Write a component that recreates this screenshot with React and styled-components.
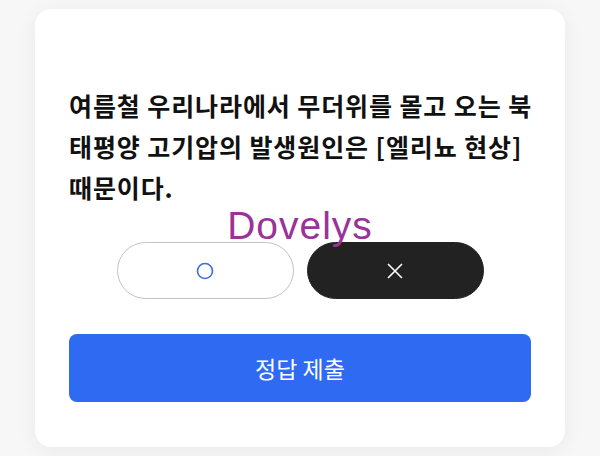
import React, { useState } from 'react';
import styled, { createGlobalStyle } from 'styled-components';

const GlobalStyle = createGlobalStyle`
  html, body {
    margin: 0;
    padding: 0;
    background: #f7f7f7;
  }

  body {
    font-family: 'Noto Sans CJK KR', 'Noto Sans', sans-serif;
  }
`;

const App = () => {
  const [answer, setAnswer] = useState('x');

  return (
    <>
      <GlobalStyle />
      <Page>
        <Card>
          <Question>
            여름철 우리나라에서 무더위를 몰고 오는 북
            <br />
            태평양 고기압의 발생원인은 [엘리뇨 현상]
            <br />
            때문이다.
          </Question>

          <Choices>
            <Choice selected={answer === 'o'} onClick={() => setAnswer('o')}>
              <svg width="18" height="18" viewBox="0 0 18 18">
                <circle cx="9" cy="9" r="7.5" fill="none" stroke="#3a6fd8" strokeWidth="1.6" />
              </svg>
            </Choice>
            <Choice selected={answer === 'x'} onClick={() => setAnswer('x')}>
              <svg width="18" height="18" viewBox="0 0 18 18">
                <path d="M2 2 L16 16 M16 2 L2 16" stroke="#fff" strokeWidth="1.6" />
              </svg>
            </Choice>
          </Choices>

          <SubmitButton>정답 제출</SubmitButton>

          <Watermark>Dovelys</Watermark>
        </Card>
      </Page>
    </>
  );
};

// styled components
const Page = styled.div`
  box-sizing: border-box;
  width: 600px;
  height: 456px;
  padding: 9px 35px;
`;

const Card = styled.div`
  position: relative;
  box-sizing: border-box;
  height: 438px;
  padding: 76px 34px 45px;
  display: flex;
  flex-direction: column;
  background: #fff;
  border-radius: 16px;
  box-shadow: 0 4px 22px rgba(0, 0, 0, 0.06);
`;

const Question = styled.p`
  margin: 0;
  font-size: 25px;
  font-weight: 700;
  line-height: 41px;
  color: #111;
  white-space: nowrap;
  letter-spacing: 0.9px;
`;

const Choices = styled.div`
  display: flex;
  justify-content: center;
  gap: 13px;
  margin-top: 34px;
`;

const Choice = styled.button`
  box-sizing: border-box;
  width: 177px;
  height: 57px;
  display: flex;
  align-items: center;
  justify-content: center;
  padding: 0;
  border-radius: 29px;
  cursor: pointer;
  border: 1.5px solid ${({ selected }) => (selected ? '#222' : '#c4c4c4')};
  background: ${({ selected }) => (selected ? '#222' : '#fff')};
`;

const SubmitButton = styled.button`
  margin-top: 35px;
  height: 68px;
  border: none;
  border-radius: 8px;
  background: #2f6bf2;
  color: #fff;
  font-family: 'Noto Sans CJK KR', sans-serif;
  font-size: 23px;
  font-weight: 400;
  cursor: pointer;
`;

const Watermark = styled.div`
  position: absolute;
  top: 197px;
  left: 0;
  right: 0;
  text-align: center;
  font-family: 'Liberation Sans', Arial, sans-serif;
  font-size: 39px;
  line-height: 1;
  letter-spacing: 1px;
  color: #993399;
  pointer-events: none;
`;

export default App;
